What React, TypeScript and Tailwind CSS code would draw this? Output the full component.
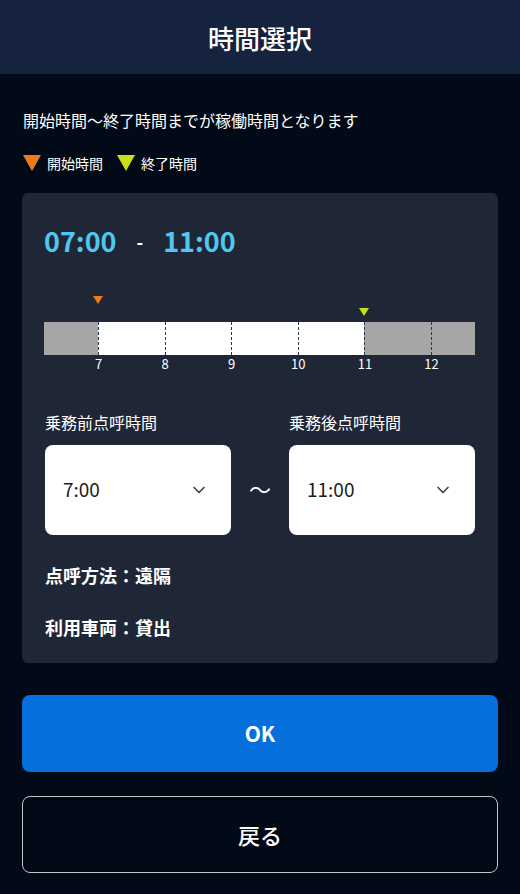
const font = { fontFamily: '"Noto Sans CJK JP", "Noto Sans", sans-serif' }

const hours = [7, 8, 9, 10, 11, 12]
const start = 7
const end = 11
const pxPerHour = 66.6
const firstOffset = 54

function hourX(h: number): number {
  return firstOffset + (h - 7) * pxPerHour
}

function Chevron() {
  return (
    <svg className="h-5 w-5 text-[#444]" fill="none" viewBox="0 0 24 24" strokeWidth={2} stroke="currentColor">
      <path strokeLinecap="round" strokeLinejoin="round" d="m6 9 6 6 6-6" />
    </svg>
  )
}

function TimeSelect({ label, value }: { label: string; value: string }) {
  return (
    <div className="flex w-[186px] flex-col">
      <span className="text-[16px] leading-6 text-white">{label}</span>
      <div className="mt-[11px] flex h-[90px] items-center justify-between rounded-lg bg-white pl-[18px] pr-[22px]">
        <span className="text-[19px] text-[#1d1d1d]">{value}</span>
        <Chevron />
      </div>
    </div>
  )
}

function Timeline() {
  return (
    <div className="relative h-[80px] w-[431px]">
      {/* markers */}
      <div
        className="absolute top-[2px] h-0 w-0 -translate-x-1/2 border-x-[5px] border-t-[8px] border-x-transparent border-t-[#f07a1a]"
        style={{ left: hourX(start) }}
      />
      <div
        className="absolute top-[14px] h-0 w-0 -translate-x-1/2 border-x-[5px] border-t-[8px] border-x-transparent border-t-[#c8e016]"
        style={{ left: hourX(end) }}
      />
      {/* bar */}
      <div className="absolute top-[28px] left-0 h-[33px] w-full bg-[#a6a6a6]">
        <div
          className="absolute top-0 h-full bg-white"
          style={{ left: hourX(start), width: hourX(end) - hourX(start) }}
        />
        {hours.map((h) => (
          <div
            key={h}
            className="absolute top-0 h-full border-l border-dashed border-[#2c3550]"
            style={{ left: hourX(h) }}
          />
        ))}
      </div>
      {hours.map((h) => (
        <span
          key={h}
          className="absolute top-[62px] -translate-x-1/2 text-[13px] leading-4 text-white"
          style={{ left: hourX(h) + 0.5 }}
        >
          {h}
        </span>
      ))}
    </div>
  )
}

export default function App() {
  return (
    <div className="flex min-h-[894px] w-[520px] flex-col bg-[#030a17]" style={font}>
      <header className="flex h-[74px] items-center justify-center bg-[#16233f]">
        <h1 className="text-[26px] font-medium text-white">時間選択</h1>
      </header>

      <div className="flex flex-col px-[22px]">
        <p className="mt-[34px] pl-px text-[16px] leading-6 text-white">開始時間〜終了時間までが稼働時間となります</p>

        <div className="mt-[21px] flex items-center text-[14px] leading-5 text-white">
          <span className="ml-px h-0 w-0 border-x-[9px] border-t-[16px] border-x-transparent border-t-[#f07a1a]" />
          <span className="ml-[6px]">開始時間</span>
          <span className="ml-[14px] h-0 w-0 border-x-[9px] border-t-[16px] border-x-transparent border-t-[#c8e016]" />
          <span className="ml-[6px]">終了時間</span>
        </div>

        <section className="mt-[20px] flex h-[470px] flex-col rounded-md bg-[#1f2736] px-[22px]">
          <div className="mt-[28px] flex items-center text-[27px] font-bold text-[#4fc7ee]">
            <span>07:00</span>
            <span className="mx-[20px] text-[18px] text-white">-</span>
            <span>11:00</span>
          </div>

          <div className="mt-[32px]">
            <Timeline />
          </div>

          <div className="mt-[36px] flex items-end pl-px">
            <TimeSelect label="乗務前点呼時間" value="7:00" />
            <span className="mb-[30px] flex w-[58px] justify-center text-[22px] text-white">〜</span>
            <TimeSelect label="乗務後点呼時間" value="11:00" />
          </div>

          <p className="mt-[26px] pl-px text-[18px] font-bold leading-7 text-white">点呼方法：遠隔</p>
          <p className="mt-[24px] pl-px text-[18px] font-bold leading-7 text-white">利用車両：貸出</p>
        </section>

        <button className="mt-[32px] h-[77px] rounded-lg bg-[#0570dc] text-[21px] font-bold text-white">OK</button>
        <button className="mt-[24px] h-[77px] rounded-lg border border-[#c5c5c5] text-[22px] font-medium text-white">
          戻る
        </button>
      </div>
    </div>
  )
}
